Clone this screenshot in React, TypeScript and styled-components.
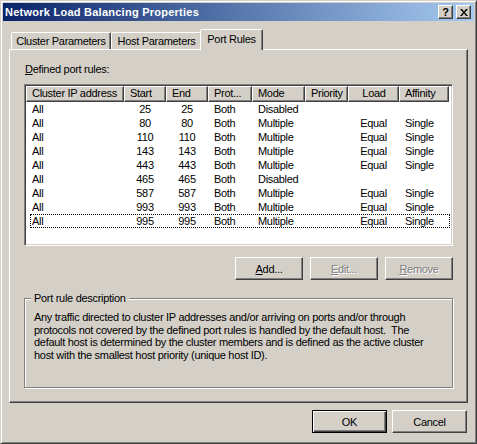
import React from 'react'
import styled, { createGlobalStyle, css } from 'styled-components'

const GlobalStyle = createGlobalStyle`
  html, body {
    margin: 0;
    padding: 0;
    background: #d4d0c8;
  }
  body {
    font-family: "Liberation Sans", Arial, sans-serif;
    font-size: 11px;
    letter-spacing: -0.3px;
    color: #000;
  }
  * { box-sizing: border-box; }
`

const raised = css`
  border: 1px solid;
  border-color: #fff #404040 #404040 #fff;
  box-shadow: inset -1px -1px 0 #808080, inset 1px 1px 0 #d4d0c8;
`

const Window = styled.div`
  width: 477px;
  height: 444px;
  padding: 2px;
  background: #d4d0c8;
  border: 1px solid;
  border-color: #d4d0c8 #404040 #404040 #d4d0c8;
  box-shadow: inset 1px 1px 0 #fff, inset -1px -1px 0 #808080;
  display: flex;
  flex-direction: column;
`

const TitleBar = styled.div`
  height: 18px;
  display: flex;
  align-items: center;
  padding: 0 3px 0 2px;
  background: linear-gradient(to right, #0a246a, #a6caf0);
`

const Title = styled.span`
  flex: 1;
  color: #fff;
  font-weight: bold;
  font-size: 11px;
  letter-spacing: 0.25px;
`

const CaptionButton = styled.div<{ $gap?: number }>`
  width: 15px;
  height: 14px;
  margin-left: ${p => p.$gap ?? 0}px;
  background: #d4d0c8;
  ${raised}
  display: flex;
  align-items: center;
  justify-content: center;
  font-weight: bold;
  font-size: 11px;
  letter-spacing: 0;
  line-height: 12px;
`

const Body = styled.div`
  flex: 1;
  display: flex;
  flex-direction: column;
  padding: 8px 6px 0 6px;
`

const TabStrip = styled.div`
  display: flex;
  align-items: flex-end;
  height: 20px;
  padding-left: 2px;
  position: relative;
  z-index: 1;
`

const Tab = styled.div<{ $active?: boolean; $width: number }>`
  width: ${p => p.$width}px;
  height: ${p => (p.$active ? 21 : 17)}px;
  margin: ${p => (p.$active ? '0 -2px -1px -2px' : '0')};
  padding-bottom: ${p => (p.$active ? 3 : 0)}px;
  background: #d4d0c8;
  border: 1px solid;
  border-bottom: none;
  border-color: #fff #404040 transparent #fff;
  border-radius: 2px 2px 0 0;
  box-shadow: inset -1px 0 0 #808080;
  display: flex;
  align-items: center;
  justify-content: center;
  position: relative;
  z-index: ${p => (p.$active ? 2 : 1)};
  white-space: nowrap;
`

const Panel = styled.div`
  height: 354px;
  padding: 13px 14px 0 14px;
  border: 1px solid;
  border-color: #fff #404040 #404040 #fff;
  box-shadow: inset -1px -1px 0 #808080;
  display: flex;
  flex-direction: column;
`

const Label = styled.div`
  line-height: 13px;
  margin-left: 1px;
`

const ListView = styled.div`
  margin-top: 8px;
  height: 162px;
  background: #fff;
  padding: 1px;
  border: 1px solid;
  border-color: #808080 #fff #fff #808080;
  box-shadow: inset 1px 1px 0 #404040, inset -1px -1px 0 #d4d0c8;
`

const HeaderRow = styled.div`
  display: flex;
  height: 16px;
`

const HeaderCell = styled.div<{ $width: number; $align: string }>`
  width: ${p => p.$width}px;
  height: 16px;
  padding: 0 4px 0 5px;
  line-height: 13px;
  text-align: ${p => p.$align};
  background: #d4d0c8;
  border: 1px solid;
  border-color: #fff #404040 #404040 #fff;
  box-shadow: inset -1px -1px 0 #808080;
  white-space: nowrap;
  overflow: hidden;
`

const Row = styled.div<{ $focused?: boolean }>`
  display: flex;
  height: 14px;
  margin-left: 4px;
  width: fit-content;
  border: 1px dotted ${p => (p.$focused ? '#000' : 'transparent')};
`

const Cell = styled.div<{ $width: number; $align: string; $pad: number }>`
  width: ${p => p.$width}px;
  line-height: 12px;
  padding-left: ${p => p.$pad}px;
  text-align: ${p => p.$align};
  white-space: nowrap;
`

const ButtonRow = styled.div<{ $top: number; $gap: number }>`
  display: flex;
  justify-content: flex-end;
  gap: ${p => p.$gap}px;
  margin-top: ${p => p.$top}px;
`

const Button = styled.button<{ $width: number; $default?: boolean }>`
  width: ${p => p.$width}px;
  height: 23px;
  padding: 0;
  font-family: "Liberation Sans", Arial, sans-serif;
  font-size: 11px;
  letter-spacing: -0.3px;
  color: #000;
  background: #d4d0c8;
  ${p =>
    p.$default
      ? css`
          border: 1px solid #000;
          box-shadow: inset 1px 1px 0 #fff, inset -1px -1px 0 #404040, inset -2px -2px 0 #808080;
        `
      : raised}

  &:disabled {
    color: #808080;
    text-shadow: 1px 1px 0 #fff;
  }
`

const GroupBox = styled.div`
  margin-top: 18px;
  height: 90px;
  padding: 0 8px 0 9px;
  border: 1px solid #808080;
  box-shadow: 1px 1px 0 #fff, inset 1px 1px 0 #fff;
`

const GroupLabel = styled.div`
  display: table;
  margin: -7px 0 0 -3px;
  padding: 0 3px;
  line-height: 13px;
  background: #d4d0c8;
`

const Description = styled.div`
  margin-top: 6px;
  line-height: 12.7px;
  white-space: pre;
`

const Footer = styled.div`
  display: flex;
  justify-content: flex-end;
  gap: 5px;
  margin-top: 7px;
  padding-right: 1px;
`

type Column = { label: string; width: number; head: string; align: string }

const columns: Column[] = [
  { label: 'Cluster IP address', width: 98, head: 'left', align: 'left' },
  { label: 'Start', width: 42, head: 'left', align: 'center' },
  { label: 'End', width: 42, head: 'left', align: 'center' },
  { label: 'Prot...', width: 44, head: 'left', align: 'left' },
  { label: 'Mode', width: 53, head: 'left', align: 'left' },
  { label: 'Priority', width: 43, head: 'left', align: 'left' },
  { label: 'Load', width: 51, head: 'center', align: 'center' },
  { label: 'Affinity', width: 50, head: 'left', align: 'left' },
]

const multiple = (port: string) => ['All', port, port, 'Both', 'Multiple', '', 'Equal', 'Single']
const disabled = (port: string) => ['All', port, port, 'Both', 'Disabled', '', '', '']

const rules: string[][] = [
  disabled('25'),
  multiple('80'),
  multiple('110'),
  multiple('143'),
  multiple('443'),
  disabled('465'),
  multiple('587'),
  multiple('993'),
  multiple('995'),
]

const descriptionLines = [
  'Any traffic directed to cluster IP addresses and/or arriving on ports and/or through',
  'protocols not covered by the defined port rules is handled by the default host.  The',
  'default host is determined by the cluster members and is defined as the active cluster',
  'host with the smallest host priority (unique host ID).',
]

const CloseGlyph = () => (
  <svg width="8" height="7" viewBox="0 0 8 7">
    <path d="M0 0h2l2 2.4L6 0h2L5 3.5 8 7H6L4 4.6 2 7H0l3-3.5z" fill="#000" />
  </svg>
)

const App: React.FC = () => {
  return (
    <>
      <GlobalStyle />
      <Window>
        <TitleBar>
          <Title>Network Load Balancing Properties</Title>
          <CaptionButton>?</CaptionButton>
          <CaptionButton $gap={3}>
            <CloseGlyph />
          </CaptionButton>
        </TitleBar>
        <Body>
          <TabStrip>
            <Tab $width={100}>Cluster Parameters</Tab>
            <Tab $width={91}>Host Parameters</Tab>
            <Tab $width={63} $active>
              Port Rules
            </Tab>
          </TabStrip>
          <Panel>
            <Label>
              <u>D</u>efined port rules:
            </Label>
            <ListView>
              <HeaderRow>
                {columns.map(c => (
                  <HeaderCell key={c.label} $width={c.width} $align={c.head}>
                    {c.label}
                  </HeaderCell>
                ))}
              </HeaderRow>
              {rules.map((r, ri) => (
                <Row key={ri} $focused={ri === rules.length - 1}>
                  {r.map((v, ci) => {
                    const col = columns[ci]
                    const first = ci === 0
                    return (
                      <Cell
                        key={ci}
                        $width={first ? col.width - 5 : col.width}
                        $align={col.align}
                        $pad={col.align === 'center' ? 0 : first ? 1 : 6}
                      >
                        {v}
                      </Cell>
                    )
                  })}
                </Row>
              ))}
            </ListView>
            <ButtonRow $top={11} $gap={7}>
              <Button $width={68}>
                <u>A</u>dd...
              </Button>
              <Button $width={68} disabled>
                <u>E</u>dit...
              </Button>
              <Button $width={68} disabled>
                <u>R</u>emove
              </Button>
            </ButtonRow>
            <GroupBox>
              <GroupLabel>Port rule description</GroupLabel>
              <Description>
                {descriptionLines.map(l => (
                  <div key={l}>{l}</div>
                ))}
              </Description>
            </GroupBox>
          </Panel>
          <Footer>
            <Button $width={75} $default>
              OK
            </Button>
            <Button $width={75}>Cancel</Button>
          </Footer>
        </Body>
      </Window>
    </>
  )
}

export default App
